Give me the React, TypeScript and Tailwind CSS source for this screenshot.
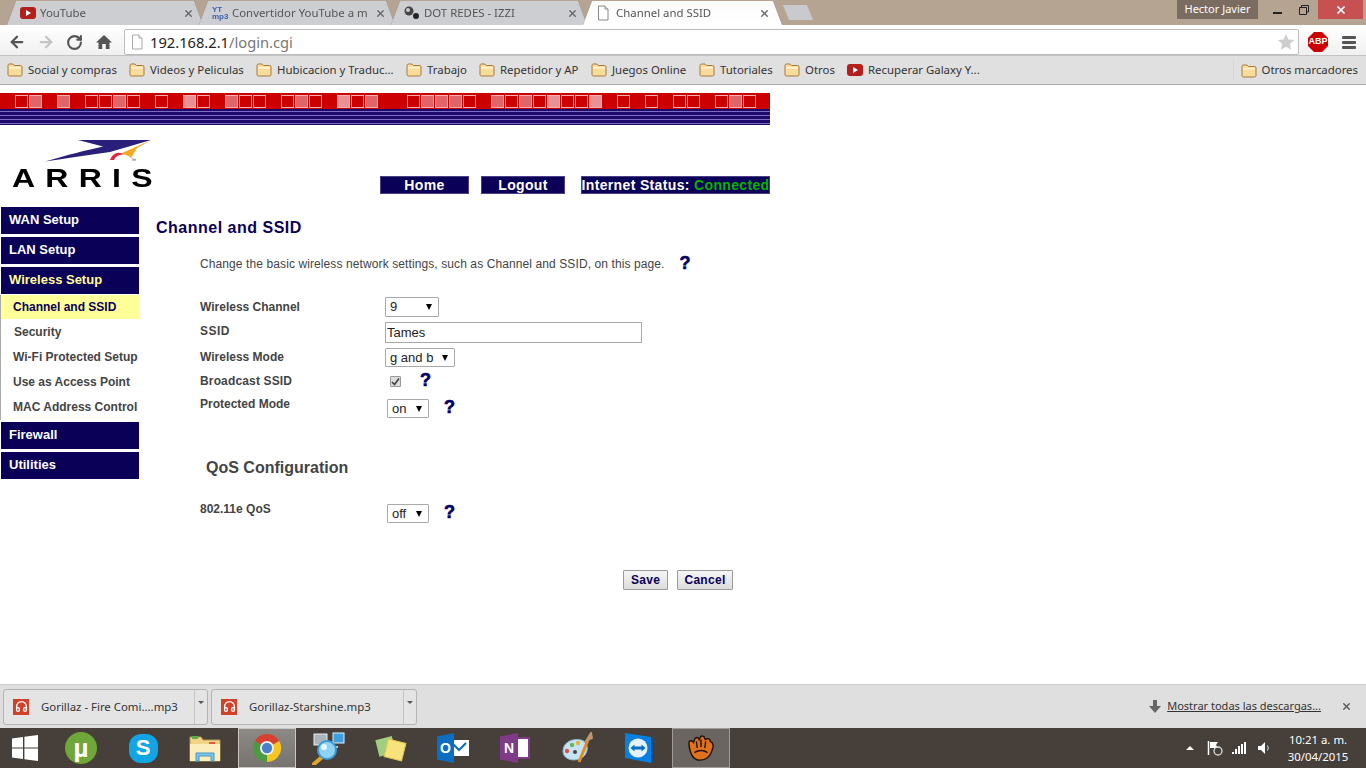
import { ArrowLeft, ArrowRight, Headphones, RotateCw, X } from 'lucide-react';

// 0 = empty, 1 = outline only, 2 = mid, 3 = light
const squares = [
  1, 2, 0, 2, 0, 1, 1, 2, 1, 0, 1, 0, 3, 1, 0, 2, 1, 1, 0, 1, 2, 1, 0, 3, 1, 2, 0, 0, 1, 2, 2, 2, 1, 0, 2, 1, 2, 1,
  3, 1, 1, 3, 0, 1, 0, 1, 0, 1, 1, 0, 1, 2, 1,
];

const squareStyles = [
  'border-transparent bg-transparent',
  'border-[#ffb0b0] bg-[#cc0000]',
  'border-[#ffb0b0] bg-[#e06468]',
  'border-[#ffb0b0] bg-[#ea9094]',
];

const bookmarks = [
  { label: 'Social y compras', width: 'w-[122px]' },
  { label: 'Videos y Peliculas', width: 'w-[127px]' },
  { label: 'Hubicacion y Traduc...', width: 'w-[150px]' },
  { label: 'Trabajo', width: 'w-[73px]' },
  { label: 'Repetidor y AP', width: 'w-[112px]' },
  { label: 'Juegos Online', width: 'w-[108px]' },
  { label: 'Tutoriales', width: 'w-[85px]' },
  { label: 'Otros', width: 'w-[63px]' },
];

const subMenu = ['Security', 'Wi-Fi Protected Setup', 'Use as Access Point', 'MAC Address Control'];

function Folder() {
  return (
    <svg width="16" height="15" viewBox="0 0 16 15" className="shrink-0">
      <path d="M1 3.5 Q1 2 2.5 2 H6 L7.5 3.5 H13.5 Q15 3.5 15 5 V12.5 Q15 14 13.5 14 H2.5 Q1 14 1 12.5 Z" fill="#f8dc9c" stroke="#a9793f" />
      <rect x="2" y="5" width="12" height="1.5" fill="#fff3d0" />
    </svg>
  );
}

function YouTubeIcon() {
  return (
    <svg width="16" height="14" viewBox="0 0 16 14" className="shrink-0">
      <rect x="0" y="1" width="16" height="12" rx="3" fill="#b3201c" />
      <path d="M6 4 L11 7 L6 10 Z" fill="#fff" />
    </svg>
  );
}

function PageIcon({ color = '#888' }: { color?: string }) {
  return (
    <svg width="14" height="16" viewBox="0 0 14 16" className="shrink-0">
      <path d="M2.5 1 H9 L12 4 V15 H2.5 Z" fill="#fff" stroke={color} />
      <path d="M9 1 V4 H12" fill="#eee" stroke={color} />
    </svg>
  );
}

function Tab({ children, title, active }: { children: React.ReactNode; title: string; active?: boolean }) {
  return (
    <div className={`-mr-[4px] ${active ? 'relative z-10' : ''} [filter:drop-shadow(0_0_0.6px_#6f6459)]`}>
      <div
        className={`flex h-[24px] items-center pl-[13px] ${
          active
            ? 'w-[199px] bg-gradient-to-b from-[#fafafa] to-white pr-[12px] [clip-path:polygon(0_100%,9px_0,190px_0,199px_100%)]'
            : 'w-[196px] bg-[#cdced2] pr-[9px] [clip-path:polygon(0_100%,9px_0,187px_0,196px_100%)]'
        }`}
      >
        <div className="flex w-[20px] shrink-0 items-center">{children}</div>
        <span className="whitespace-nowrap text-[11.4px] text-[#555]">{title}</span>
        <X size={11} strokeWidth={3} className="ml-auto shrink-0 text-[#666]" />
      </div>
    </div>
  );
}

function NavButton({ children, width }: { children: React.ReactNode; width: string }) {
  return (
    <div className={`flex h-[18px] items-center justify-center border border-[#4b3f86] bg-[#0a0058] text-[14px] font-bold tracking-[0.35px] text-white ${width}`}>
      {children}
    </div>
  );
}

function SideHead({ label, yellow }: { label: string; yellow?: boolean }) {
  return (
    <div className={`ml-[1px] flex h-[27px] w-[138px] items-center pb-[2px] pl-[8px] text-[13px] font-bold ${yellow ? 'text-[#ffff99]' : 'text-white'} bg-[#0a0058]`}>
      {label}
    </div>
  );
}

function Help() {
  return <span className="text-[18px] font-bold leading-none text-[#000066] [-webkit-text-stroke:0.6px_#000066]">?</span>;
}

function FakeSelect({ value, width, height }: { value: string; width: string; height: string }) {
  return (
    <div className={`flex items-center justify-between rounded-[1px] border border-[#a9a9a9] bg-white pl-[4px] pr-[6px] text-[13px] font-normal text-[#222] ${width} ${height}`}>
      <span>{value}</span>
      <span className="h-0 w-0 border-x-[3.5px] border-t-[6px] border-x-transparent border-t-black" />
    </div>
  );
}

function FormButton({ label, width }: { label: string; width: string }) {
  return (
    <button className={`h-[20px] rounded-[1px] border border-[#9a9a9a] bg-gradient-to-b from-[#f6f6f6] to-[#dcdcdc] text-[12px] font-bold tracking-[0.3px] text-[#0a0058] ${width}`}>
      {label}
    </button>
  );
}

function DownloadChip({ name, width }: { name: string; width: string }) {
  return (
    <div className={`flex h-[36px] items-center rounded-[3px] border border-[#b4b4b4] bg-[#e4e4e4] ${width}`}>
      <div className="ml-[9px] flex h-[16px] w-[16px] shrink-0 items-center justify-center bg-[#d0432a]">
        <Headphones size={13} strokeWidth={2.5} className="text-white" />
      </div>
      <span className="ml-[12px] flex-1 whitespace-nowrap text-[11.4px] text-[#333]">{name}</span>
      <div className="flex h-full w-[13px] shrink-0 items-start justify-center border-l border-[#c4c4c4] pt-[11px]">
        <span className="h-0 w-0 border-x-[3px] border-t-[3px] border-x-transparent border-t-[#555]" />
      </div>
    </div>
  );
}

function TaskSlot({ children, active }: { children: React.ReactNode; active?: 'light' | 'dark' }) {
  return (
    <div
      className={`flex h-[40px] shrink-0 items-center justify-center ${
        active === 'light'
          ? 'mx-[2px] w-[58px] border border-[#c9c7c4] bg-gradient-to-b from-[#8d8985] to-[#77736e]'
          : active === 'dark'
            ? 'mx-[2px] w-[58px] border border-[#a09c98] bg-[#6a6560]'
            : 'w-[62px]'
      }`}
    >
      {children}
    </div>
  );
}

function ChromeIcon() {
  return (
    <svg width="30" height="30" viewBox="0 0 32 32">
      <path d="M16 16 L3 8.5 A15 15 0 0 1 29 8.5 Z" fill="#d8412f" />
      <path d="M16 16 L29 8.5 A15 15 0 0 1 16 31 Z" fill="#f5c521" />
      <path d="M16 16 L16 31 A15 15 0 0 1 3 8.5 Z" fill="#4b9b43" />
      <circle cx="16" cy="16" r="7.5" fill="#f2f2f2" />
      <circle cx="16" cy="16" r="5.5" fill="#4a7fd0" />
    </svg>
  );
}

function TaskIcons() {
  return (
    <>
      <TaskSlot>
        <div className="relative flex h-[32px] w-[32px] items-center justify-center rounded-full bg-[#6fa838]">
          <span className="font-['Liberation_Sans',sans-serif] text-[26px] font-bold leading-none text-white">µ</span>
        </div>
      </TaskSlot>
      <TaskSlot>
        <div className="flex h-[29px] w-[29px] items-center justify-center rounded-[12px] bg-[#12a5e3]">
          <span className="font-['Liberation_Sans',sans-serif] text-[22px] font-bold leading-none text-white">S</span>
        </div>
      </TaskSlot>
      <TaskSlot>
        <svg width="32" height="30" viewBox="0 0 32 30">
          <path d="M1 4 H12 L14 7 H31 V28 H1 Z" fill="#f2d488" stroke="#b69a55" />
          <rect x="3" y="3" width="6" height="3" fill="#5bb04b" />
          <rect x="20" y="9" width="6" height="3" fill="#e05a3a" />
          <path d="M1 11 H31 V28 H1 Z" fill="#fbeebc" />
          <path d="M7 28 V20 H25 V28 H22 V23 H10 V28 Z" fill="#7cc4e8" stroke="#4d97c4" />
        </svg>
      </TaskSlot>
      <TaskSlot active="light">
        <ChromeIcon />
      </TaskSlot>
      <TaskSlot>
        <svg width="34" height="34" viewBox="0 0 34 34">
          <rect x="2" y="3" width="13" height="11" fill="#aab4bc" stroke="#e8ecef" />
          <rect x="21" y="2" width="11" height="10" fill="#3d9fe0" stroke="#e0f0fa" />
          <path d="M9 16 H26" stroke="#c8ccd0" strokeWidth="2" />
          <path d="M9 27 L2 33" stroke="#e3a62d" strokeWidth="4" strokeLinecap="round" />
          <circle cx="15" cy="19" r="9" fill="#8ed4f5" stroke="#3f9ad4" strokeWidth="2" />
          <circle cx="12" cy="16" r="3" fill="#ffffff" opacity="0.8" />
        </svg>
      </TaskSlot>
      <TaskSlot>
        <svg width="34" height="30" viewBox="0 0 34 30">
          <rect x="3" y="5" width="17" height="17" fill="#9fcf7f" transform="rotate(-14 11 13)" />
          <rect x="12" y="8" width="18" height="18" fill="#f7e27c" stroke="#e0c654" transform="rotate(14 21 17)" />
        </svg>
      </TaskSlot>
      <TaskSlot>
        <div className="relative flex h-[30px] w-[32px] items-center">
          <div className="absolute right-0 top-[7px] h-[16px] w-[20px] bg-white" />
          <svg width="16" height="12" viewBox="0 0 16 12" className="absolute right-[2px] top-[9px]">
            <path d="M1 1 L8 8 L15 1" fill="none" stroke="#0a6fc2" strokeWidth="2" />
          </svg>
          <div className="relative flex h-[30px] w-[17px] items-center justify-center bg-[#0a6fc2] [clip-path:polygon(0_12%,100%_0,100%_100%,0_88%)]">
            <span className="font-['Liberation_Sans',sans-serif] text-[14px] font-bold text-white">O</span>
          </div>
        </div>
      </TaskSlot>
      <TaskSlot>
        <div className="relative flex h-[30px] w-[30px] items-center">
          <div className="absolute right-0 top-[4px] h-[22px] w-[14px] border-2 border-[#803a87] bg-white" />
          <div className="relative flex h-[30px] w-[18px] items-center justify-center bg-[#803a87] [clip-path:polygon(0_12%,100%_0,100%_100%,0_88%)]">
            <span className="font-['Liberation_Sans',sans-serif] text-[14px] font-bold text-white">N</span>
          </div>
        </div>
      </TaskSlot>
      <TaskSlot>
        <svg width="32" height="32" viewBox="0 0 32 32">
          <path d="M2 19 C2 10 12 6 20 8 C28 10 28 20 22 25 C16 30 2 29 2 19 Z" fill="#c5e3f2" stroke="#8fb9cf" />
          <circle cx="6" cy="19" r="2.2" fill="#d9534a" />
          <circle cx="11" cy="13" r="2.2" fill="#6eb556" />
          <circle cx="17" cy="11" r="2.2" fill="#e8b23a" />
          <circle cx="14" cy="20" r="2" fill="#444" />
          <path d="M18 30 L27 8" stroke="#e58b22" strokeWidth="3" />
          <path d="M25 9 L30 1 L31 6 Z" fill="#b89a6e" stroke="#b89a6e" strokeWidth="2" />
        </svg>
      </TaskSlot>
      <TaskSlot>
        <svg width="30" height="32" viewBox="0 0 30 32">
          <path d="M1 1 L27 5 V31 L1 26 Z" fill="#0a7fe0" />
          <path d="M27 5 L29 7 V30 L27 31 Z" fill="#0a4f9a" />
          <circle cx="14" cy="16" r="9.5" fill="#e6f3fc" />
          <path d="M6.5 16 L10.5 12.5 V14.5 H17.5 V12.5 L21.5 16 L17.5 19.5 V17.5 H10.5 V19.5 Z" fill="#0a6fc8" />
        </svg>
      </TaskSlot>
      <TaskSlot active="dark">
        <svg width="30" height="28" viewBox="0 0 30 30">
          <path
            d="M2 10 C2 7 5 6 7 9 L8 6 C9 3 12 3 13 6 L14 4 C15 1 19 2 19 5 L20 6 C22 4 25 5 25 8 C28 9 29 13 27 17 C25 24 20 28 14 28 C7 28 3 22 2 10 Z"
            fill="#e2711d"
            stroke="#1d1208"
            strokeWidth="1.5"
          />
          <path d="M8 20 C12 17 18 17 22 20 M10 8 L11 15 M15 6 L15 14 M20 8 L19 15" fill="none" stroke="#1d1208" strokeWidth="1.5" />
        </svg>
      </TaskSlot>
    </>
  );
}

export default function App() {
  return (
    <div className="flex h-[768px] w-[1366px] flex-col overflow-hidden bg-white font-['Liberation_Sans',Arial,sans-serif]">
      {/* Chrome window frame */}
      <div className="flex h-[25px] shrink-0 items-end bg-[#b5a492] pl-[7px] font-['Noto_Sans',sans-serif]">
        <Tab title="YouTube">
          <YouTubeIcon />
        </Tab>
        <Tab title="Convertidor YouTube a m">
          <div className="flex flex-col font-['Liberation_Sans',sans-serif] text-[8px] font-bold leading-[7px] text-[#3f5fb5]">
            <span>YT</span>
            <span>mp3</span>
          </div>
        </Tab>
        <Tab title="DOT REDES - IZZI">
          <svg width="16" height="14" viewBox="0 0 16 14">
            <circle cx="5" cy="5" r="4.5" fill="#444" />
            <circle cx="12" cy="10" r="3" fill="#222" />
            <circle cx="4" cy="4" r="2" fill="#ccc" />
          </svg>
        </Tab>
        <Tab title="Channel and SSID" active>
          <PageIcon />
        </Tab>
        <div className="mb-[5px] ml-[5px] h-[15px] w-[30px] bg-[#c8cacd] [clip-path:polygon(0_0,24px_0,100%_100%,6px_100%)]" />
        <div className="ml-auto flex h-full items-start">
          <div className="flex h-[19px] w-[81px] items-center justify-center bg-[#7a6c60] text-[11px] text-white">Hector Javier</div>
          <div className="flex h-[19px] w-[39px] items-center justify-center">
            <span className="mt-[6px] h-[2px] w-[9px] bg-[#222]" />
          </div>
          <div className="flex h-[19px] w-[13px] items-center justify-center">
            <svg width="10" height="10" viewBox="0 0 10 10">
              <path d="M2.5 2.5 V0.5 H9.5 V7 H7.5 M0.5 2.5 H7.5 V9.5 H0.5 Z" fill="none" stroke="#222" />
            </svg>
          </div>
          <div className="ml-[8px] mr-[3px] flex h-[19px] w-[45px] items-center justify-center bg-[#c75050]">
            <X size={12} strokeWidth={3.5} className="text-white" />
          </div>
        </div>
      </div>

      {/* Toolbar */}
      <div className="flex h-[30px] shrink-0 items-center bg-gradient-to-b from-white to-[#f0f0f0] pt-[4px] font-['Noto_Sans',sans-serif]">
        <div className="flex w-[124px] shrink-0 items-center pl-[8px]">
          <ArrowLeft size={18} strokeWidth={3} className="text-[#555]" />
          <ArrowRight size={18} strokeWidth={3} className="ml-[11px] text-[#c4c4c4]" />
          <RotateCw size={17} strokeWidth={3} className="ml-[11px] text-[#555]" />
          <svg width="16" height="16" viewBox="0 0 16 16" className="ml-[13px]">
            <path d="M8 1 L16 8.5 H13.5 V15 H9.8 V10 H6.2 V15 H2.5 V8.5 H0 Z" fill="#555" />
          </svg>
        </div>
        <div className="flex h-[26px] w-[1175px] shrink-0 items-center rounded-[2px] border border-[#bdbdbd] bg-white pl-[5px] pr-[3px]">
          <PageIcon color="#aaa" />
          <span className="ml-[6px] text-[14.7px] text-[#222]">192.168.2.1</span>
          <span className="text-[14.7px] text-[#777]">/login.cgi</span>
          <svg width="18" height="18" viewBox="0 0 24 24" className="ml-auto">
            <path d="M12 1.5 L15.2 8.6 L23 9.4 L17.2 14.6 L18.8 22.3 L12 18.4 L5.2 22.3 L6.8 14.6 L1 9.4 L8.8 8.6 Z" fill="#cdcdcd" />
          </svg>
        </div>
        <div className="ml-[9px] flex h-[20px] w-[20px] items-center justify-center bg-[#cc0000] [clip-path:polygon(30%_0,70%_0,100%_30%,100%_70%,70%_100%,30%_100%,0_70%,0_30%)]">
          <span className="font-['Liberation_Sans',sans-serif] text-[9px] font-bold text-white">ABP</span>
        </div>
        <div className="ml-[14px] flex w-[14px] flex-col gap-[2px]">
          <span className="h-[3px] rounded-[1px] bg-[#555]" />
          <span className="h-[3px] rounded-[1px] bg-[#555]" />
          <span className="h-[3px] rounded-[1px] bg-[#555]" />
        </div>
      </div>

      {/* Bookmarks */}
      <div className="flex h-[30px] shrink-0 items-center border-y border-b-[#aaa] border-t-[#c4c4c4] bg-[#e0e0e0] pl-[7px] font-['Noto_Sans',sans-serif] text-[11.4px] text-[#333]">
        {bookmarks.map((b) => (
          <div key={b.label} className={`flex items-center gap-[5px] whitespace-nowrap ${b.width}`}>
            <Folder />
            <span>{b.label}</span>
          </div>
        ))}
        <div className="flex items-center gap-[5px] whitespace-nowrap">
          <YouTubeIcon />
          <span>Recuperar Galaxy Y...</span>
        </div>
        <div className="ml-auto flex h-[20px] items-center gap-[5px] border-l border-[#cfd6de] pl-[7px] pr-[8px]">
          <Folder />
          <span>Otros marcadores</span>
        </div>
      </div>

      {/* Router page */}
      <div className="flex min-h-0 flex-1 flex-col pt-[8px]">
        <div className="flex h-[16px] w-[770px] shrink-0 items-center bg-[#cc0000] pl-[15px]">
          {squares.map((kind, i) => (
            <div key={i} className="w-[14px] shrink-0">
              <div className={`h-[13px] w-[13px] border ${squareStyles[kind]}`} />
            </div>
          ))}
        </div>
        <div className="flex h-[16px] w-[770px] shrink-0 flex-col gap-[3px] bg-[#1e0a6a] pt-[2px]">
          <div className="h-[1px] bg-[#7d6cc4]" />
          <div className="h-[1px] bg-[#7d6cc4]" />
          <div className="h-[1px] bg-[#7d6cc4]" />
          <div className="h-[1px] bg-[#7d6cc4]" />
        </div>

        <div className="flex h-[82px] w-[770px] shrink-0 items-start">
          <div className="ml-[12px] mt-[15px] w-[368px] shrink-0">
            <svg width="141" height="28" viewBox="0 0 141 28" className="block">
              <path d="M66 0 H139 L98 12 C75 15 50 19 33 21.5 C55 15 75 10 91 6.5 Z" fill="#2a1f7a" />
              <path d="M139 0 L108 14 C112 14 116 15 119 18 L125 8 Z" fill="#f7a823" />
              <path d="M98 20 C100 15 104 12 108 13 L112 14 C106 15 103 17 102 20 Z" fill="#e8213f" />
              <text x="119" y="22" fontSize="5" fill="#333">™</text>
            </svg>
            <div className="-mt-[2px] origin-left scale-x-[1.28] text-[25px] font-bold leading-[25px] tracking-[8px] text-black">ARRIS</div>
          </div>
          <div className="mt-[51px] flex items-start">
            <NavButton width="w-[89px]">Home</NavButton>
            <div className="w-[12px]" />
            <NavButton width="w-[84px]">Logout</NavButton>
            <div className="w-[16px]" />
            <NavButton width="w-[189px]">
              <span className="whitespace-nowrap">
                Internet Status: <span className="text-[#00b400]">Connected</span>
              </span>
            </NavButton>
          </div>
        </div>

        <div className="flex min-h-0 flex-1">
          {/* Sidebar */}
          <div className="flex w-[140px] shrink-0 flex-col">
            <SideHead label="WAN Setup" />
            <div className="h-[3px]" />
            <SideHead label="LAN Setup" />
            <div className="h-[3px]" />
            <SideHead label="Wireless Setup" yellow />
            <div className="mt-[1px] flex h-[125px] flex-col border-l border-[#aaa] text-[12px] font-bold text-[#444]">
              <div className="flex h-[24px] w-[139px] shrink-0 items-center whitespace-nowrap bg-[#ffff99] pl-[12px] text-[#0a0058]">Channel and SSID</div>
              {subMenu.map((item, i) => (
                <div key={item} className={`flex h-[25px] items-center whitespace-nowrap ${i === 0 ? 'pl-[13px]' : 'pl-[12px]'}`}>
                  {item}
                </div>
              ))}
            </div>
            <div className="h-[2px]" />
            <SideHead label="Firewall" />
            <div className="h-[3px]" />
            <SideHead label="Utilities" />
          </div>

          {/* Form */}
          <div className="flex min-w-0 flex-1 flex-col">
            <div className="flex h-[42px] shrink-0 items-center pl-[16px] text-[16px] font-bold tracking-[0.5px] text-[#0a0058]">Channel and SSID</div>
            <div className="flex h-[30px] shrink-0 items-center pl-[60px] text-[12px] tracking-[0.1px] text-[#444]">
              <span>Change the basic wireless network settings, such as Channel and SSID, on this page.</span>
              <span className="ml-[15px]">
                <Help />
              </span>
            </div>

            <div className="mt-[18px] flex flex-col pl-[60px] text-[12px] font-bold text-[#444]">
              <div className="flex h-[20px] items-center">
                <span className="w-[185px]">Wireless Channel</span>
                <FakeSelect value="9" width="w-[54px]" height="h-[20px]" />
              </div>
              <div className="mt-[5px] flex h-[21px] items-center">
                <span className="-mt-[3px] w-[185px] tracking-[0.5px]">SSID</span>
                <input
                  readOnly
                  value="Tames"
                  className="h-[21px] w-[257px] border border-[#a9a9a9] bg-white pl-[1px] text-[13px] font-normal text-[#222] outline-none"
                />
              </div>
              <div className="mt-[5px] flex h-[19px] items-center">
                <span className="-mt-[1px] w-[185px]">Wireless Mode</span>
                <FakeSelect value="g and b" width="w-[70px]" height="h-[19px]" />
              </div>
              <div className="mt-[4px] flex h-[20px] items-center">
                <span className="w-[185px] tracking-[0.15px]">Broadcast SSID</span>
                <div className="ml-[5px] flex h-[11px] w-[11px] items-center justify-center rounded-[1px] border border-[#999] bg-[#ddd]">
                  <svg width="9" height="9" viewBox="0 0 9 9">
                    <path d="M1 5 L3.5 7.5 L8 1.5" fill="none" stroke="#444" strokeWidth="1.7" />
                  </svg>
                </div>
                <span className="ml-[19px]">
                  <Help />
                </span>
              </div>
              <div className="mt-[6px] flex h-[21px] items-start">
                <span className="w-[187px] leading-[14px]">Protected Mode</span>
                <div className="mt-[2px]">
                  <FakeSelect value="on" width="w-[42px]" height="h-[19px]" />
                </div>
                <span className="ml-[15px] mt-[1px]">
                  <Help />
                </span>
              </div>
            </div>

            <div className="ml-[66px] mt-[40px] flex h-[20px] shrink-0 items-center text-[16px] font-bold text-[#444]">QoS Configuration</div>

            <div className="mt-[24px] flex h-[21px] shrink-0 items-start pl-[60px] text-[12px] font-bold text-[#444]">
              <span className="w-[187px] leading-[14px]">802.11e QoS</span>
              <div className="mt-[2px]">
                <FakeSelect value="off" width="w-[42px]" height="h-[19px]" />
              </div>
              <span className="ml-[15px] mt-[1px]">
                <Help />
              </span>
            </div>

            <div className="mt-[47px] flex gap-[9px] pl-[483px]">
              <FormButton label="Save" width="w-[45px]" />
              <FormButton label="Cancel" width="w-[56px]" />
            </div>
          </div>
        </div>
      </div>

      {/* Downloads shelf */}
      <div className="flex h-[44px] shrink-0 items-center gap-[3px] border-t border-[#cfcfcf] bg-[#dfdfdf] pl-[3px] font-['Noto_Sans',sans-serif]">
        <DownloadChip name="Gorillaz - Fire Comi....mp3" width="w-[205px]" />
        <DownloadChip name="Gorillaz-Starshine.mp3" width="w-[206px]" />
        <div className="ml-auto flex items-center">
          <svg width="12" height="13" viewBox="0 0 12 13">
            <path d="M4 0 H8 V6 H12 L6 13 L0 6 H4 Z" fill="#666" />
          </svg>
          <span className="ml-[6px] text-[11px] text-[#333] underline">Mostrar todas las descargas...</span>
          <X size={11} strokeWidth={3} className="ml-[20px] mr-[14px] text-[#555]" />
        </div>
      </div>

      {/* Windows taskbar */}
      <div className="flex h-[40px] shrink-0 items-center bg-[#463f3a] font-['Noto_Sans',sans-serif]">
        <div className="flex h-full w-[50px] shrink-0 items-center justify-center">
          <svg width="26" height="26" viewBox="0 0 26 26">
            <path d="M0 3.6 L11 2 V12.4 H0 Z M12.4 1.8 L26 0 V12.4 H12.4 Z M0 13.6 H11 V24 L0 22.4 Z M12.4 13.6 H26 V26 L12.4 24.2 Z" fill="#fff" />
          </svg>
        </div>
        <TaskIcons />
        <div className="ml-auto flex h-full items-center">
          <span className="h-0 w-0 border-x-[4px] border-b-[4px] border-x-transparent border-b-white" />
          <svg width="16" height="16" viewBox="0 0 16 16" className="ml-[13px]">
            <path d="M1.5 1 V15" stroke="#fff" strokeWidth="1.5" />
            <path d="M3 2 H11 L9 5 L11 8 H3 Z" fill="#fff" />
            <circle cx="11" cy="11" r="4" fill="#463f3a" stroke="#ddd" strokeWidth="1.3" />
          </svg>
          <div className="ml-[9px] flex h-[12px] items-end gap-[1px]">
            <span className="h-[2px] w-[2px] bg-white" />
            <span className="h-[5px] w-[2px] bg-white" />
            <span className="h-[8px] w-[2px] bg-white" />
            <span className="h-[10px] w-[2px] bg-white" />
            <span className="h-[12px] w-[2px] bg-white" />
          </div>
          <svg width="14" height="14" viewBox="0 0 14 14" className="ml-[11px]">
            <path d="M1 5 H4 L8 1 V13 L4 9 H1 Z" fill="#fff" />
            <path d="M10.5 4.5 Q12 7 10.5 9.5" fill="none" stroke="#ddd" />
          </svg>
          <div className="ml-[16px] mr-[17px] flex w-[62px] flex-col items-center text-[11.4px] leading-[17px] text-white">
            <span className="whitespace-nowrap">10:21 a. m.</span>
            <span>30/04/2015</span>
          </div>
        </div>
      </div>
    </div>
  );
}
